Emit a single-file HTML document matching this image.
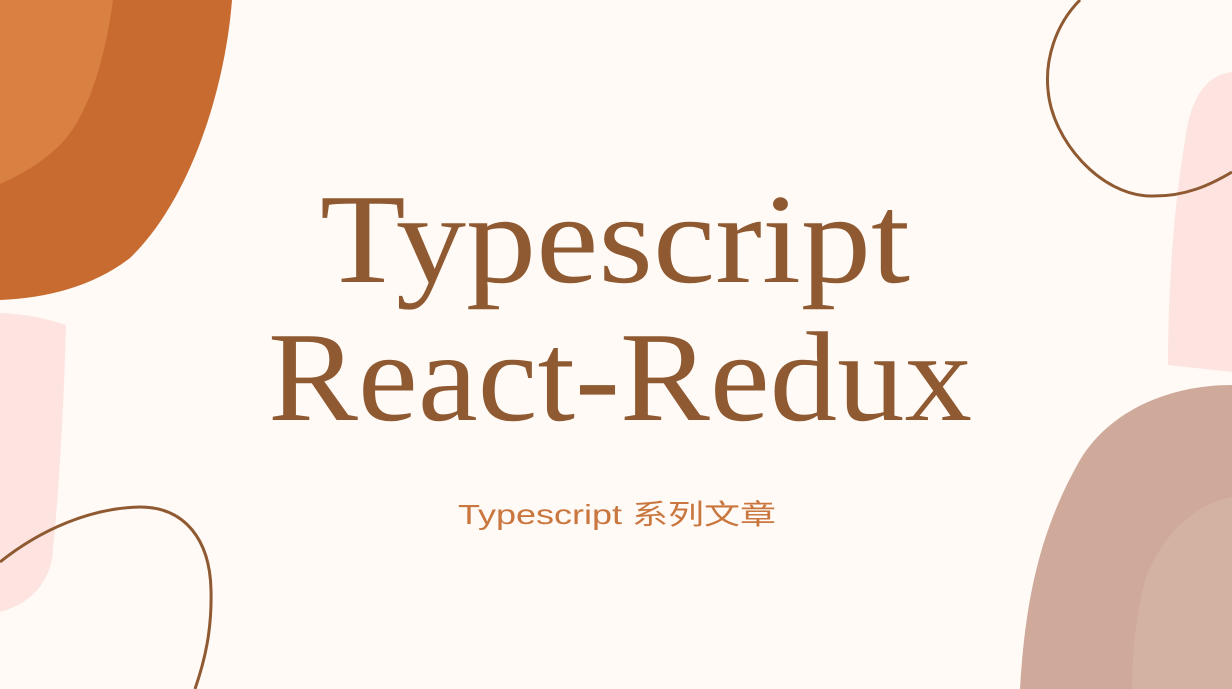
<!DOCTYPE html>
<html><head><meta charset="utf-8"><style>
html,body{margin:0;padding:0;background:#fffaf5;}
svg{display:block}
</style></head><body>
<svg width="1232" height="689" viewBox="0 0 1232 689" xmlns="http://www.w3.org/2000/svg">
<rect width="1232" height="689" fill="#fffaf5"/>
<path d="M0 0 H232 C225 90 190 200 130 258 C95 285 50 298 0 300 Z" fill="#c86b30"/>
<path d="M0 0 H113 C105 60 88 115 62 143 C42 163 20 175 0 184 Z" fill="#d98043"/>
<path d="M0 313 C25 314 45 318 66 325 C64 400 60 480 52 560 C45 590 25 605 0 612 Z" fill="#fde4e1"/>
<path d="M0 562 C40 530 90 508 140 507 C185 507 210 540 211 590 C212 630 205 660 195 689" fill="none" stroke="#8f5a32" stroke-width="3"/>
<path d="M1232 72 C1205 75 1190 100 1185 140 C1175 200 1168 280 1168 365 L1232 372 Z" fill="#fde4e1"/>
<path d="M1080 0 C1055 25 1045 60 1048 90 C1052 140 1100 195 1150 196 C1185 197 1210 185 1232 172" fill="none" stroke="#8f5a32" stroke-width="3"/>
<path d="M1232 385 C1170 385 1110 410 1080 460 C1040 530 1025 600 1020 689 H1232 Z" fill="#cfa99a"/>
<path d="M1232 497 C1190 505 1160 540 1145 580 C1135 620 1133 650 1132 689 H1232 Z" fill="#d4b2a3"/>
<text x="320" y="282" font-family="Liberation Serif, serif" font-size="128" fill="#8f5a32" textLength="590" lengthAdjust="spacingAndGlyphs">Typescript</text>
<text x="268" y="420" font-family="Liberation Serif, serif" font-size="128" fill="#8f5a32" textLength="704" lengthAdjust="spacingAndGlyphs">React-Redux</text>
<text x="458" y="524" font-family="Liberation Sans, Noto Sans CJK SC, sans-serif" font-size="28" fill="#c9773f" textLength="318" lengthAdjust="spacingAndGlyphs">Typescript 系列文章</text>
</svg>
</body></html>
